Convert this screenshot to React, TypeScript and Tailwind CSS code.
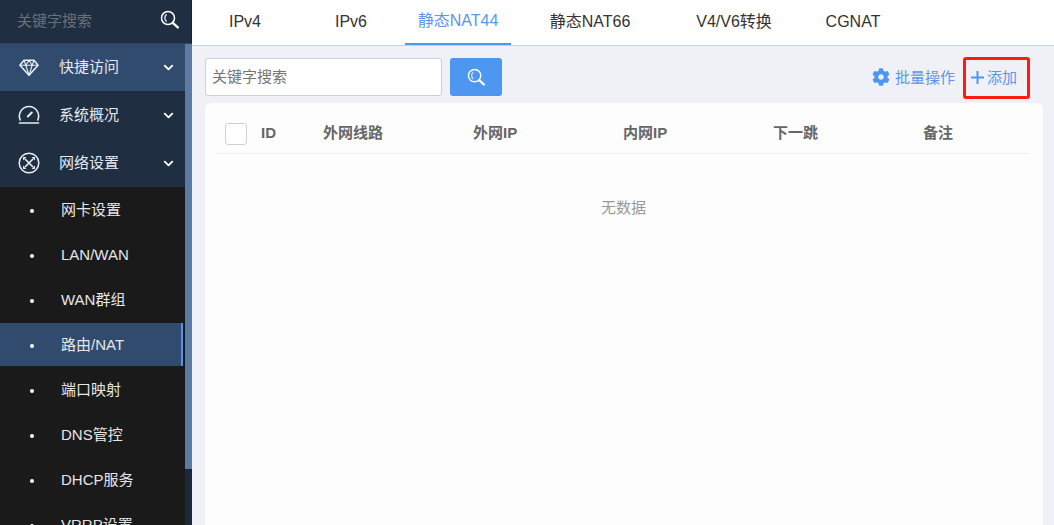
import React from 'react';
import { ChevronDown } from 'lucide-react';
import { FaCog } from 'react-icons/fa';

const FONT = { fontFamily: '"Liberation Sans", "Noto Sans CJK SC", sans-serif' };

const SearchIcon = ({ className = '' }: { className?: string }) => (
  <svg className={className} viewBox="0 0 20 20" fill="none">
    <circle cx="8" cy="8" r="6.5" stroke="#fff" strokeWidth="1.5" />
    <path d="M6.6 4.4a4.6 4.6 0 0 0 0 7.2" stroke="#cfe3fb" strokeWidth="1.4" />
    <path d="M12.8 12.8l5 4.6" stroke="#fff" strokeWidth="2.4" strokeLinecap="round" />
  </svg>
);

const DiamondIcon = () => (
  <svg className="w-[20px] h-[19px]" viewBox="0 0 22 20" fill="none" stroke="#e8edf3" strokeWidth="1.7" strokeLinejoin="round">
    <path d="M5.5 2h11L21 7.5 11 18.5 1 7.5z" />
    <path d="M1 7.5h20M7.5 7.5L11 18.5l3.5-11M5.5 2l2 5.5L11 2l3.5 5.5L16.5 2" strokeWidth="1.2" />
  </svg>
);

const GaugeIcon = () => (
  <svg className="w-[22px] h-[20px]" viewBox="0 0 22 20" fill="none" stroke="#e8edf3" strokeWidth="1.6" strokeLinecap="round">
    <path d="M2.2 15a9.6 9.6 0 1 1 17.6 0" />
    <path d="M1.5 18h19" />
    <path d="M9.8 11.5l4-4" strokeWidth="2" />
  </svg>
);

const NetworkIcon = () => (
  <svg className="w-[22px] h-[22px]" viewBox="0 0 22 22" fill="none" stroke="#e8edf3" strokeWidth="1.5" strokeLinecap="round">
    <circle cx="11" cy="11" r="9.8" />
    <path d="M7 7l8 8M15 7l-8 8" strokeWidth="1.7" strokeLinecap="butt" />
    <path d="M5 5h3.400L5 8.400zM17 5h-3.400L17 8.400zM5 17h3.400L5 13.600zM17 17h-3.400L17 13.600z" fill="#e8edf3" stroke="none" />
  </svg>
);

const SideGroup = ({ icon, label, active, h }: { icon: React.ReactNode; label: string; active?: boolean; h: string }) => (
  <div className={`flex items-center ${h} ${active ? 'bg-[#314b6e]' : ''}`}>
    <div className="w-[59px] flex justify-center pr-[1px] shrink-0">{icon}</div>
    <span className="text-[15px] text-[#e6e9ee] flex-1">{label}</span>
    <ChevronDown className="w-[15px] h-[15px] text-white mr-[9px]" strokeWidth={3} />
  </div>
);

const SubItem = ({ label, active }: { label: string; active?: boolean }) => (
  <div className="h-[45px] flex items-center shrink-0">
    <div className={`h-[43px] w-[183px] flex items-center pt-[2px] ${active ? 'bg-[#314b6e] border-r-2 border-[#4d97f0]' : ''}`}>
      <span className="w-[4px] h-[4px] rounded-full bg-white ml-[30px] mr-[27px] shrink-0" />
      <span className="text-[15px] text-[#e6e6e6]">{label}</span>
    </div>
  </div>
);

const subItems = ['网卡设置', 'LAN/WAN', 'WAN群组', '路由/NAT', '端口映射', 'DNS管控', 'DHCP服务', 'VRRP设置'];

const Sidebar = () => (
  <aside className="w-[192px] shrink-0 h-full flex flex-col bg-[#1c2737]">
    <div className="h-[44px] shrink-0 flex items-center bg-[#202e42] border-b border-[#344356] border-r border-r-[#1a2230] pl-[17px]">
      <span className="text-[15px] text-[#69707a] flex-1">关键字搜索</span>
      <SearchIcon className="w-[20px] h-[20px] mr-[11px] mb-[4px]" />
    </div>
    <div className="flex flex-1 min-h-0">
      <div className="w-[185px] flex flex-col overflow-hidden">
        <SideGroup icon={<DiamondIcon />} label="快捷访问" active h="h-[47px] shrink-0" />
        <div className="bg-[#202e42] shrink-0">
          <SideGroup icon={<GaugeIcon />} label="系统概况" h="h-[48px]" />
          <SideGroup icon={<NetworkIcon />} label="网络设置" h="h-[48px]" />
        </div>
        <div className="bg-[#1a1a1a] flex-1 flex flex-col">
          {subItems.map((s) => (
            <SubItem key={s} label={s} active={s === '路由/NAT'} />
          ))}
        </div>
      </div>
      <div className="w-[7px] h-[425px] bg-[#5b7ba3]" />
    </div>
  </aside>
);

const tabs = [
  { label: 'IPv4', cls: '' },
  { label: 'IPv6', cls: '' },
  { label: '静态NAT44', cls: 'ml-[1px]', active: true },
  { label: '静态NAT66', cls: 'ml-[26px]' },
  { label: 'V4/V6转换', cls: 'ml-[38px]' },
  { label: 'CGNAT', cls: 'ml-[13px]' },
];

const columns = ['外网线路', '外网IP', '内网IP', '下一跳', '备注'];

export default function App() {
  return (
    <div className="w-[1054px] h-[525px] flex overflow-hidden bg-white" style={FONT}>
      <Sidebar />
      <main className="flex-1 flex flex-col min-w-0 bg-[#eff1f6]">
        <nav className="h-[46px] shrink-0 flex bg-white border-b border-[#c5d0e3]">
          {tabs.map((t) => (
            <div
              key={t.label}
              className={`w-[106px] h-[45px] flex items-center justify-center pb-[2px] text-[16px] ${t.cls} ${
                t.active ? 'text-[#5a96ee] border-b-2 border-[#4d97f0]' : 'text-[#333]'
              }`}
            >
              {t.label}
            </div>
          ))}
        </nav>
        <div className="flex-1 flex flex-col pl-[13px] pr-[11px] min-h-0">
          <div className="h-[57px] shrink-0 flex items-start">
            <div className="mt-[12px] w-[237px] h-[38px] bg-white border border-[#c5d0e3] rounded-[3px] flex items-center pl-[6px] text-[15px] text-[#757575]">
              关键字搜索
            </div>
            <button className="mt-[12px] ml-[8px] w-[52px] h-[38px] bg-[#4d97f0] rounded-[3px] flex items-center justify-center">
              <SearchIcon className="w-[19px] h-[19px]" />
            </button>
            <div className="ml-auto flex items-center text-[15px] text-[#5a96ee] mt-[11px]">
              <FaCog className="w-[18px] h-[18px] text-[#4d97f0] mr-[5px] mb-[3px]" />
              <span>批量操作</span>
              <div className="ml-[8px] mr-[13px] w-[67px] h-[42px] border-[3px] border-[#ff1a12] rounded-[3px] flex items-center pl-[4px]">
                <svg className="w-[15px] h-[15px] mr-[2px] mb-[2px]" viewBox="0 0 15 15" fill="none" stroke="#4d97f0" strokeWidth="2">
                  <path d="M7.5 1v13M1 7.5h13" />
                </svg>
                <span>添加</span>
              </div>
            </div>
          </div>
          <div className="flex-1 bg-[#fdfdfd] rounded-t-[6px] pl-[11px] pr-[13px] pt-[12px]">
            <div className="h-[39px] flex items-center border-b border-[#eeeeee] text-[15px] font-bold text-[#666] pb-[1px]">
              <span className="w-[22px] h-[22px] ml-[9px] bg-white border border-[#d0d0d0] rounded-[3px] shrink-0" />
              <span className="w-[62px] ml-[14px] shrink-0">ID</span>
              {columns.map((c) => (
                <span key={c} className="w-[150px] shrink-0">{c}</span>
              ))}
            </div>
            <div className="mt-[43px] text-center text-[15px] text-[#999] ml-[1px]">无数据</div>
          </div>
        </div>
      </main>
    </div>
  );
}
